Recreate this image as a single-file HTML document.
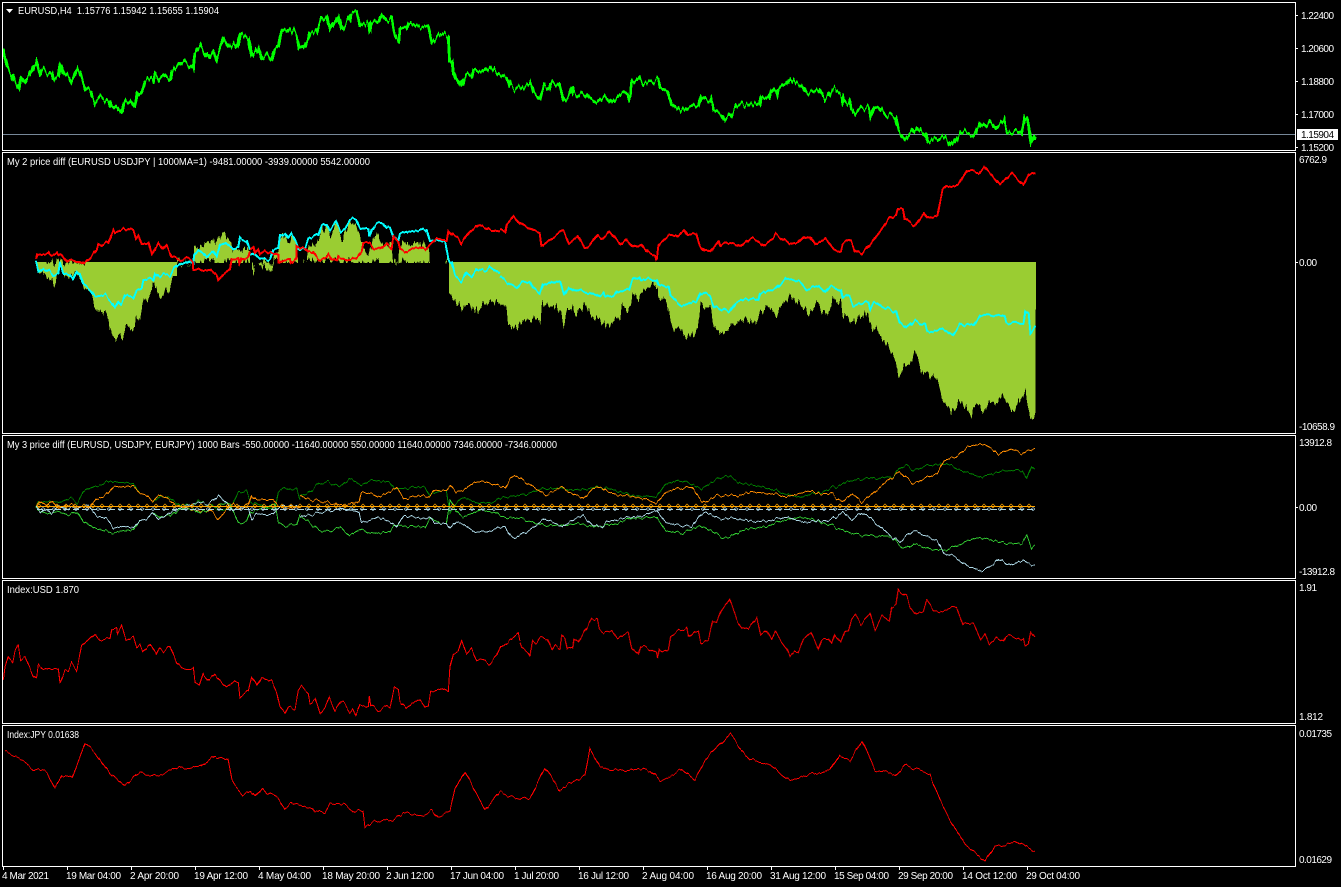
<!DOCTYPE html>
<html><head><meta charset="utf-8"><title>EURUSD,H4</title>
<style>
html,body{margin:0;padding:0;background:#000;width:1341px;height:887px;overflow:hidden}
svg{display:block}
text{font-family:"Liberation Sans",sans-serif;font-size:10px;fill:#fff}
polyline{fill:none;vector-effect:non-scaling-stroke;shape-rendering:crispEdges}
</style></head><body>
<svg width="1341" height="887" viewBox="0 0 1341 887" xmlns="http://www.w3.org/2000/svg">
<defs>
<filter id="j1" filterUnits="userSpaceOnUse" x="0" y="0" width="1341" height="887" color-interpolation-filters="sRGB">
<feTurbulence type="fractalNoise" baseFrequency="0.3 0.002" numOctaves="2" seed="3"/>
<feColorMatrix values="1 0 0 0 0 0 0 0 0 .5 0 0 1 0 0 0 0 0 0 1" result="n"/>
<feDisplacementMap in="SourceGraphic" in2="n" scale="14" xChannelSelector="G" yChannelSelector="R"/>
</filter>
<filter id="j3" filterUnits="userSpaceOnUse" x="0" y="0" width="1341" height="887" color-interpolation-filters="sRGB">
<feTurbulence type="fractalNoise" baseFrequency="0.2 0.002" numOctaves="2" seed="11"/>
<feColorMatrix values="1 0 0 0 0 0 0 0 0 .5 0 0 1 0 0 0 0 0 0 1" result="n"/>
<feDisplacementMap in="SourceGraphic" in2="n" scale="7" xChannelSelector="G" yChannelSelector="R"/>
</filter>
<filter id="j4" filterUnits="userSpaceOnUse" x="0" y="0" width="1341" height="887" color-interpolation-filters="sRGB">
<feTurbulence type="fractalNoise" baseFrequency="0.4 0.002" numOctaves="2" seed="5"/>
<feColorMatrix values="1 0 0 0 0 0 0 0 0 .5 0 0 1 0 0 0 0 0 0 1" result="n"/>
<feDisplacementMap in="SourceGraphic" in2="n" scale="20" xChannelSelector="G" yChannelSelector="R"/>
</filter>
<pattern id="dia" x="37" y="502" width="9" height="8" patternUnits="userSpaceOnUse">
<path d="M0 4L2 2L4 4L2 6Z" fill="none" stroke="#FFA500" stroke-width=".7"/>
</pattern>
<pattern id="dib" x="41" y="505" width="11" height="8" patternUnits="userSpaceOnUse">
<path d="M0 4L2 2.5L4 4L2 5.5Z" fill="none" stroke="#ADD8E6" stroke-width=".7"/>
</pattern>
<polyline id="o1" points="108,232 120,215 140,225 155,212 175,235 200,225 240,230 265,235 290,205 310,200 325,190 340,168 375,172 400,168 420,190 440,195 458,215 475,195 500,205 520,220 545,230 580,240 600,245 625,240 640,250 655,268 680,240 700,220 715,235 745,225 755,195 770,210 800,208 820,210 835,228 850,235 900,232"/>
<polyline id="g1" points="108,232 115,218 150,212 175,218 210,205 232,218 250,185 280,170 300,165 335,152 365,158 400,162 420,190 440,195 458,215 480,200 510,205 540,225 580,225 595,212 640,230 660,240 690,240 715,185 740,185 750,215 780,225 825,240 835,185 855,172 875,180 890,175 900,210"/>
<polyline id="o2" points="0,178 15,185 50,195 90,205 125,195 130,165 150,170 165,180 190,165 205,150 220,185 260,175 275,180 285,160 310,160 318,145 330,165 345,160 370,135 395,135 435,152 445,125 455,115 490,145 510,165 520,175 555,150 570,165 600,185 620,155 640,150 650,165 680,175 710,180 730,185 755,200 775,165 800,155 830,150 850,190 860,195 885,175 930,175 960,165 1000,170 1030,180 1075,162 1100,170 1125,170 1150,195 1170,170 1190,195 1210,175 1225,155 1250,125 1270,105 1300,140 1330,120 1350,110 1365,70 1390,60 1415,30 1445,20 1465,35 1480,55 1505,35 1530,50 1550,35 1557,33"/>
<polyline id="g2" points="0,178 15,170 40,140 60,135 85,150 105,125 130,145 150,130 190,135 200,155 265,150 275,175 300,160 310,160 318,230 330,200 345,180 380,200 410,195 430,180 470,175 515,155 555,155 590,160 630,150 670,160 700,175 755,180 775,140 810,130 850,155 895,118 910,118 935,140 985,150 1025,170 1060,180 1105,165 1170,130 1200,125 1255,120 1270,95 1285,85 1300,100 1330,85 1370,80 1400,100 1440,120 1500,100 1530,100 1540,125 1550,85 1557,95"/>
</defs>
<rect width="1341" height="887" fill="#000"/>

<!-- panel 1 price -->
<rect x="3" y="134" width="1292" height="1" fill="#778899"/>
<g stroke="#00FF00" stroke-width="2.8" filter="url(#j1)">
<polyline transform="scale(.33333)" points="10,150 15,180 25,210 35,225 45,250 57,265 63,232 75,245 90,222 100,200 108,186 118,222 125,205 140,218 155,215 162,238 175,232 182,186 190,215 205,228 215,245 232,210 243,228 255,265 270,272 285,305 300,292 325,305 335,330 350,318 365,335 375,300 390,300 405,320 412,280 425,275 435,245 445,240 460,245 465,220 480,240 495,225 510,240 518,210 535,195 550,185 570,198 580,205 585,155 600,138 610,155 625,175 640,155 648,175 670,118 685,140 700,130 712,145 722,100 745,112 755,170 775,142 785,175 800,165 815,180 825,145 835,140 845,90 860,95 872,85 890,105 897,140 910,145 920,130 930,100 950,95 962,60 980,50 990,90 1015,48 1025,88 1050,55 1055,35 1070,35 1080,75 1105,70 1110,100 1112,70 1135,65 1145,45 1160,60 1175,55 1183,100 1197,120 1200,85 1220,85 1225,70 1260,80 1285,80 1295,125 1320,105"/>
<polyline transform="translate(440,0) scale(.38265,.33333)" points="0,100 22,108 25,180 32,178 35,215 42,235 55,260 68,225 83,232 88,210 110,215 130,200 150,220 175,232 185,262 205,265 235,250 245,280 262,295 272,258 285,268 292,245 312,255 322,300 335,290 345,265 350,285 380,285 390,298 410,305 430,290 445,308 465,290 490,275 497,300 500,250 520,235 530,250 570,240 575,265 595,275 605,312 630,332 650,320 675,322 683,290 708,300 715,335 735,340 745,358 760,345 775,320 810,310 835,318 840,288 860,290 865,268 880,285 885,262 905,250 915,235 930,250 945,255 960,280 990,268 1005,295 1015,285 1025,268 1050,280 1055,310 1070,298 1075,325 1085,340 1100,325 1120,325 1125,350 1135,320 1145,320 1165,345 1190,350 1200,395 1218,415 1245,380 1270,405 1275,430 1290,422 1320,410 1340,435 1360,400 1395,405 1413,365 1430,378 1440,365 1455,382 1475,365 1480,395 1520,400 1528,350 1535,350 1545,430 1557,405"/>
</g>

<!-- panel 2 histogram -->
<g fill="#9ACD32" shape-rendering="crispEdges" filter="url(#j4)">
<polygon transform="translate(0,200) scale(.33333)" points="108,186 112,225 118,235 130,225 150,238 165,250 175,225 180,200 190,215 210,235 225,215 240,230 250,255 270,280 285,315 310,335 325,350 330,385 345,415 365,415 380,380 405,388 408,340 420,355 430,295 450,290 458,245 470,250 478,290 495,270 510,270 520,215 540,190 580,186"/>
<polygon transform="translate(0,200) scale(.33333)" points="582,186 582,140 610,140 640,130 655,110 668,85 680,120 700,145 730,150 750,150 750,188 582,188"/>
<polygon transform="translate(250,200) scale(.33333)" points="0,188 10,215 15,188"/>
<polygon transform="translate(250,200) scale(.33333)" points="25,188 35,200 50,212 65,205 75,188"/>
<polygon transform="translate(250,200) scale(.33333)" points="70,188 70,175 85,170 90,110 105,105 115,130 125,105 140,130 145,188"/>
<polygon transform="translate(250,200) scale(.33333)" points="155,188 160,180 165,188"/>
<polygon transform="translate(250,200) scale(.33333)" points="170,188 175,150 205,130 215,90 235,95 240,120 260,75 275,115 300,75 315,65 335,120 340,140 355,170 360,140 378,110 392,115 410,125 425,130 430,188"/>
<polygon transform="translate(250,200) scale(.33333)" points="445,188 447,140 470,130 490,125 510,130 525,128 538,150 540,188"/>
<polygon transform="translate(250,200) scale(.33333)" points="432,186 433,200 445,188"/>
<polygon transform="translate(250,200) scale(.33333)" points="585,188 590,178 597,186 597,280 610,295 630,320 660,325 680,325 710,315 720,298 750,315 750,186"/>
<polygon transform="translate(500,155) scale(.34439,.33333)" points="0,455 15,455 25,505 45,530 65,495 100,490 118,505 122,445 150,445 175,465 185,515 200,455 225,475 250,450 265,485 315,515 350,480 355,450 370,475 385,410 405,430 440,390 458,395 460,435 490,450 495,505 540,550 575,525 582,450 610,455 620,510 640,535 665,525 690,490 720,495 750,500 760,465 790,455 800,490 810,455 840,420 870,435 895,475 920,450 945,480 965,440 990,435 995,480 1020,510 1050,470 1070,490 1075,518 1095,520 1115,560 1145,595 1155,665 1190,620 1205,600 1225,650 1270,670 1290,750 1315,775 1340,735 1365,785 1390,745 1405,775 1420,745 1440,745 1460,715 1490,775 1525,700 1540,790 1555,780 1556,321 0,321"/>
</g>
<g shape-rendering="crispEdges">
<!-- keep the zero line straight -->
<rect x="449" y="250" width="587" height="12" fill="#000"/>
<rect x="449" y="262" width="586" height="14" fill="#9ACD32"/>
<rect x="85" y="250" width="92" height="12" fill="#000"/>
<rect x="85" y="262" width="92" height="14" fill="#9ACD32"/>
<rect x="194" y="263" width="58" height="9" fill="#000"/>
<rect x="276" y="263" width="118" height="9" fill="#000"/>
<rect x="399" y="263" width="34" height="9" fill="#000"/>
<rect x="36" y="250" width="14" height="12" fill="#000"/>
</g>
<!-- red / cyan -->
<g stroke="#00FFFF" stroke-width="2" filter="url(#j3)">
<polyline transform="translate(0,200) scale(.33333)" points="108,186 115,215 130,205 150,215 160,228 175,225 180,190 190,220 210,225 218,235 230,210 240,220 250,250 270,270 285,290 315,285 335,305 345,318 355,302 365,312 375,290 400,295 410,270 425,265 430,240 445,238 460,242 465,220 480,232 490,225 510,228 522,205 540,190 560,195 570,188 580,190 582,165 595,150 610,160 620,172 640,155 650,170 660,135 675,130 700,148 715,145 720,115 740,122 750,150"/>
<polyline transform="translate(250,200) scale(.33333)" points="0,165 10,160 30,178 60,180 70,150 85,145 90,105 105,100 115,115 125,100 140,130 145,145 165,145 175,115 205,102 215,72 230,72 240,90 258,68 272,95 285,85 300,60 318,58 330,85 355,90 358,112 365,90 380,70 398,70 410,85 420,80 430,110 445,120 450,100 470,92 490,95 510,90 525,95 530,90 540,125 585,122 597,180 605,185 615,225 635,245 650,220 665,230 680,208 710,212 720,202 750,220"/>
<polyline transform="translate(500,155) scale(.34439,.33333)" points="0,365 20,380 50,395 65,380 85,380 95,400 115,415 125,385 145,380 150,375 175,385 185,420 200,395 215,405 250,415 280,425 300,412 305,425 330,425 340,410 375,405 385,375 405,365 410,375 455,375 460,390 490,400 495,425 525,450 570,440 582,412 610,422 620,450 665,472 685,440 750,430 755,410 780,405 800,405 830,372 870,378 890,400 925,395 945,415 960,395 990,405 995,430 1015,425 1025,450 1070,440 1075,460 1085,440 1095,440 1110,455 1150,470 1160,505 1180,520 1205,495 1235,510 1240,530 1285,522 1315,540 1335,510 1375,512 1395,482 1465,485 1470,505 1520,505 1525,468 1535,475 1540,532 1555,512"/>
</g>
<g stroke="#FF0000" stroke-width="2" filter="url(#j3)">
<polyline transform="translate(0,200) scale(.33333)" points="108,180 112,165 125,162 145,158 150,168 170,160 175,170 185,165 200,185 210,178 235,180 252,190 270,175 290,150 295,132 305,138 325,125 340,85 345,95 365,87 380,95 400,90 408,115 415,105 425,130 445,130 455,165 475,130 490,150 500,140 515,170 530,175 545,182 565,178 578,185 580,210 595,205 605,212 630,210 650,225 655,240 670,225 690,210 695,178 715,178 718,195 725,175 745,172 750,155"/>
<polyline transform="translate(250,200) scale(.33333)" points="0,150 10,140 15,160 25,150 30,165 45,155 65,160 85,165 85,188 100,180 120,178 122,190 140,175 140,138 165,145 175,155 188,155 205,178 230,170 235,160 245,178 262,185 265,172 300,182 320,175 335,155 340,130 360,130 370,145 390,148 410,132 425,145 430,110 445,125 450,145 465,155 480,148 505,142 525,152 540,135 560,118 590,120 595,90 610,105 625,112 635,130 660,95 685,75 710,85 720,92 750,95"/>
<polyline transform="translate(500,155) scale(.34439,.33333)" points="0,225 15,232 20,205 40,180 60,205 100,230 115,232 120,270 145,250 185,228 200,262 225,245 245,282 260,275 285,240 300,250 318,230 350,268 365,255 385,278 410,268 430,295 450,300 455,315 460,272 490,245 510,245 535,222 545,240 570,235 580,270 595,290 610,288 635,255 640,270 680,262 700,275 730,250 750,255 765,268 795,250 800,240 835,262 840,268 865,262 885,242 900,245 915,270 945,255 970,285 990,288 995,268 1020,258 1030,285 1050,295 1075,265 1105,225 1130,190 1150,180 1155,162 1170,165 1175,195 1205,210 1230,175 1240,190 1270,180 1285,105 1295,95 1330,90 1355,50 1390,55 1405,38 1435,70 1450,88 1485,58 1500,70 1520,88 1535,60 1555,55"/>
</g>

<!-- panel 3 -->
<g fill="none" stroke-width="1" filter="url(#j3)">
<g transform="translate(0,430) scale(.33333)">
<use href="#g1" stroke="#008000"/>
<use href="#o1" stroke="#FF8C00"/>
</g>
<g transform="translate(0,1014) scale(1,-1)"><g transform="translate(0,430) scale(.33333)">
<use href="#g1" stroke="#32CD32"/>
<use href="#o1" stroke="#ADD8E6"/>
</g></g>
<g transform="translate(300,437) scale(.47194,.33333)">
<use href="#g2" stroke="#008000"/>
<use href="#o2" stroke="#FF8C00"/>
</g>
<g transform="translate(0,1014) scale(1,-1)"><g transform="translate(300,437) scale(.47194,.33333)">
<use href="#g2" stroke="#32CD32"/>
<use href="#o2" stroke="#ADD8E6"/>
</g></g>
</g>
<rect x="37" y="505" width="998" height="8" fill="url(#dib)"/>
<line x1="37" y1="509.5" x2="1035" y2="509.5" stroke="#ADD8E6" stroke-dasharray="6 3"/>
<rect x="37" y="502" width="998" height="8" fill="url(#dia)"/>
<rect x="37" y="506" width="998" height="1" fill="#FFA500"/>

<!-- panel 4 / 5 -->
<g stroke="#FF0000" stroke-width="1" filter="url(#j3)">
<polyline transform="translate(0,580) scale(.33333)" points="10,305 15,265 25,232 38,248 45,215 55,198 62,240 75,232 90,262 100,285 110,295 115,258 130,270 150,262 175,265 180,310 195,270 205,275 215,250 230,270 245,200 260,185 285,160 300,180 330,178 335,150 350,145 352,165 365,138 378,180 400,170 410,205 420,195 428,215 450,190 468,222 478,200 490,215 510,198 530,250 545,265 580,265 585,310 598,318 610,282 628,303 645,285 670,315 680,322 705,302 715,305 720,350 745,332 755,290 770,318 785,288 815,305 830,340 840,380 855,400 865,380 885,390 895,335 905,322 925,340 930,368 945,355 960,403 975,385 988,352 1005,390 1022,362 1035,370 1050,395 1058,385 1068,408 1080,375 1105,378 1108,345 1112,375 1135,392 1160,378 1170,382 1183,322 1195,330 1200,365 1218,385 1240,368 1260,355 1275,378 1285,375 1292,335 1325,325 1345,338 1350,265 1360,225 1375,215 1385,180 1400,222 1415,205 1430,240 1450,238 1468,252 1490,230 1502,202 1525,185 1555,160 1560,185"/>
<polyline transform="translate(520,580) scale(.33333)" points="0,190 5,205 25,215 30,225 38,180 50,188 60,172 82,178 95,210 105,195 120,205 125,165 135,175 142,208 158,205 162,175 175,185 190,160 215,115 232,120 238,150 250,160 275,150 292,175 325,158 335,205 355,225 362,198 385,205 410,220 412,235 418,203 430,212 445,205 452,165 470,155 500,148 505,175 525,155 535,155 542,190 565,180 578,125 590,130 605,90 628,58 650,118 665,140 685,148 710,115 722,168 740,152 755,178 765,155 780,178 800,205 810,230 825,212 835,218 850,180 872,160 885,185 895,208 905,175 925,175 935,195 945,165 962,185 975,150 985,152 995,115 1005,105 1022,130 1050,100 1065,148 1085,110 1108,125 1115,80 1128,75 1135,28 1160,50 1170,80 1190,105 1210,95 1220,60 1240,88 1260,98 1285,85 1310,80 1330,135 1360,130 1382,175 1395,160 1408,190 1430,170 1450,182 1458,165 1490,172 1510,180 1515,202 1525,195 1532,158 1545,175"/>
<polyline points="5,752 15,757 25,762 35,770 47,772 55,787 62,775 72,778 85,744 95,752 110,775 125,785 140,772 155,776 170,770 180,768 200,767 215,757 228,760 232,780 235,785 243,795 250,791 255,797 262,787 267,793 278,798 285,809 292,803 302,808 312,807 315,812 325,813 330,803 345,804 355,812 363,811 365,827 372,822 380,821 393,820 403,813 422,815 432,810 438,818 450,812 455,790 465,772 475,790 485,810 500,792 520,800 530,797 545,768 560,790 585,775 590,748 600,768 625,770 650,770 660,780 680,770 695,780 705,760 730,735 750,760 770,765 790,780 810,775 830,770 840,755 850,760 862,740 875,770 895,775 905,765 930,775 940,800 950,820 965,845 985,860 995,845 1005,845 1015,840 1022,845 1035,852"/>
</g>

<!-- frames -->
<g fill="#fff" shape-rendering="crispEdges">
<rect x="2" y="2" width="1294" height="1"/>
<rect x="2" y="150" width="1294" height="1"/>
<rect x="2" y="152" width="1294" height="1"/>
<rect x="2" y="433" width="1294" height="1"/>
<rect x="2" y="435" width="1294" height="1"/>
<rect x="2" y="578" width="1294" height="1"/>
<rect x="2" y="580" width="1294" height="1"/>
<rect x="2" y="723" width="1294" height="1"/>
<rect x="2" y="725" width="1294" height="1"/>
<rect x="2" y="866" width="1294" height="1"/>
<rect x="2" y="2" width="1" height="149"/>
<rect x="2" y="152" width="1" height="282"/>
<rect x="2" y="435" width="1" height="144"/>
<rect x="2" y="580" width="1" height="144"/>
<rect x="2" y="725" width="1" height="142"/>
<rect x="1295" y="2" width="1" height="149"/>
<rect x="1295" y="152" width="1" height="282"/>
<rect x="1295" y="435" width="1" height="144"/>
<rect x="1295" y="580" width="1" height="144"/>
<rect x="1295" y="725" width="1" height="142"/>
<!-- right ticks -->
<rect x="1296" y="15" width="2" height="1"/><rect x="1296" y="48" width="2" height="1"/><rect x="1296" y="81" width="2" height="1"/><rect x="1296" y="114" width="2" height="1"/><rect x="1296" y="147" width="2" height="1"/><rect x="1296" y="262" width="2" height="1"/><rect x="1296" y="507" width="2" height="1"/>
<!-- bottom ticks -->
<rect x="3" y="867" width="1" height="3"/><rect x="67" y="867" width="1" height="3"/><rect x="131" y="867" width="1" height="3"/><rect x="195" y="867" width="1" height="3"/><rect x="259" y="867" width="1" height="3"/><rect x="323" y="867" width="1" height="3"/><rect x="387" y="867" width="1" height="3"/><rect x="451" y="867" width="1" height="3"/><rect x="515" y="867" width="1" height="3"/><rect x="579" y="867" width="1" height="3"/><rect x="643" y="867" width="1" height="3"/><rect x="707" y="867" width="1" height="3"/><rect x="771" y="867" width="1" height="3"/><rect x="835" y="867" width="1" height="3"/><rect x="899" y="867" width="1" height="3"/><rect x="963" y="867" width="1" height="3"/><rect x="1027" y="867" width="1" height="3"/>
</g>

<polygon points="6,9 13,9 9.5,13" fill="#fff"/>
<rect x="1297" y="129" width="41" height="11" fill="#fff"/>

<!-- titles -->
<text x="18" y="14" textLength="201" lengthAdjust="spacingAndGlyphs" xml:space="preserve">EURUSD,H4  1.15776 1.15942 1.15655 1.15904</text>
<text x="7" y="165" textLength="363" lengthAdjust="spacingAndGlyphs">My 2 price diff (EURUSD USDJPY | 1000MA=1) -9481.00000 -3939.00000 5542.00000</text>
<text x="7" y="448" textLength="550" lengthAdjust="spacingAndGlyphs">My 3 price diff (EURUSD, USDJPY, EURJPY) 1000 Bars -550.00000 -11640.00000 550.00000 11640.00000 7346.00000 -7346.00000</text>
<text x="7" y="593" textLength="72" lengthAdjust="spacingAndGlyphs">Index:USD 1.870</text>
<text x="7" y="738" textLength="72" lengthAdjust="spacingAndGlyphs">Index:JPY 0.01638</text>

<!-- right axis -->
<text x="1301" y="19" textLength="33">1.22400</text>
<text x="1301" y="52" textLength="33">1.20600</text>
<text x="1301" y="85" textLength="33">1.18800</text>
<text x="1301" y="118" textLength="33">1.17000</text>
<text x="1301" y="138" textLength="33" style="fill:#000">1.15904</text>
<text x="1301" y="151" textLength="33">1.15200</text>
<text x="1299" y="163" textLength="28">6762.9</text>
<text x="1299" y="266" textLength="18">0.00</text>
<text x="1299" y="430" textLength="36">-10658.9</text>
<text x="1299" y="446" textLength="33">13912.8</text>
<text x="1299" y="511" textLength="18">0.00</text>
<text x="1299" y="575" textLength="36">-13912.8</text>
<text x="1299" y="591" textLength="18">1.91</text>
<text x="1299" y="720" textLength="24">1.812</text>
<text x="1299" y="737" textLength="33">0.01735</text>
<text x="1299" y="863" textLength="33">0.01629</text>

<!-- time axis -->
<text x="2" y="879" textLength="47">4 Mar 2021</text>
<text x="66" y="879" textLength="55">19 Mar 04:00</text>
<text x="130" y="879" textLength="49">2 Apr 20:00</text>
<text x="194" y="879" textLength="54">19 Apr 12:00</text>
<text x="258" y="879" textLength="53">4 May 04:00</text>
<text x="322" y="879" textLength="58">18 May 20:00</text>
<text x="386" y="879" textLength="48">2 Jun 12:00</text>
<text x="450" y="879" textLength="54">17 Jun 04:00</text>
<text x="514" y="879" textLength="45">1 Jul 20:00</text>
<text x="578" y="879" textLength="51">16 Jul 12:00</text>
<text x="642" y="879" textLength="52">2 Aug 04:00</text>
<text x="706" y="879" textLength="56">16 Aug 20:00</text>
<text x="770" y="879" textLength="56">31 Aug 12:00</text>
<text x="834" y="879" textLength="55">15 Sep 04:00</text>
<text x="898" y="879" textLength="55">29 Sep 20:00</text>
<text x="962" y="879" textLength="55">14 Oct 12:00</text>
<text x="1026" y="879" textLength="54">29 Oct 04:00</text>
</svg>
</body></html>
